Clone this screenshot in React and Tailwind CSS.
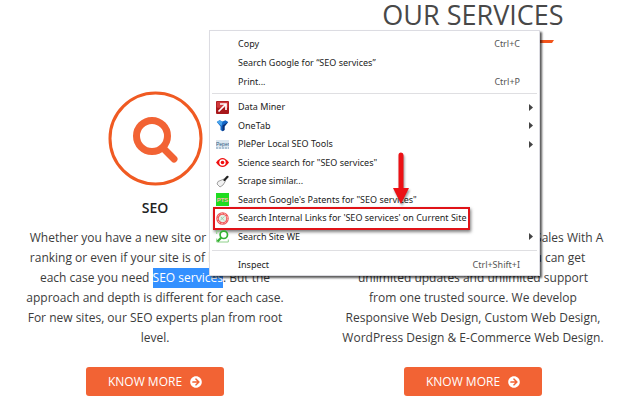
import React from 'react';
import { FaArrowCircleRight } from 'react-icons/fa';

const tools = [
  { label: 'Data Miner', icon: 'miner', submenu: true },
  { label: 'OneTab', icon: 'funnel', submenu: true },
  { label: 'PlePer Local SEO Tools', icon: 'pleper', submenu: true },
  { label: 'Science search for "SEO services"', icon: 'eye' },
  { label: 'Scrape similar...', icon: 'scraper' },
  { label: 'Search Google\'s Patents for "SEO services"', icon: 'patents' },
  { label: "Search Internal Links for 'SEO services' on Current Site", icon: 'links', marked: true },
  { label: 'Search Site WE', icon: 'site', submenu: true },
];

// 13x13 extension icons
const icons = {
  miner: (
    <>
      <rect width="13" height="13" rx="1" fill="#a8181b" />
      <rect x=".7" y=".7" width="11.6" height="6" rx="1" fill="#cf3a3c" />
      <path d="M2.5 10.5 9 4M4 3H10V9" stroke="#fff" strokeWidth="1.7" fill="none" />
    </>
  ),
  funnel: (
    <>
      <path d="M.8 3 3.5 1.2 6.5 2.6 9.5 1.2 12.2 3 8.5 7.5V11L6.5 12.2 4.5 11V7.5Z" fill="#1467c8" />
      <path d="M.8 3 3.5 1.2 6.5 2.6 5.5 7Z" fill="#4ba6ec" />
      <path d="M6.5 6.5 12.2 3 8.5 7.5V11L6.5 12.2Z" fill="#0b2f74" />
    </>
  ),
  pleper: (
    <>
      <rect y="2" width="13" height="9" fill="#dbe6ef" />
      <text x="0" y="8" fontSize="5" fill="#2f5b80" fontFamily="Liberation Sans">Peper</text>
      <path d="M0 10h13" stroke="#7d9cb8" strokeDasharray="2 1" />
    </>
  ),
  eye: (
    <>
      <path d="M0 6.5Q6.5-2.5 13 6.5 6.5 15.5 0 6.5Z" fill="#f01010" />
      <circle cx="6.5" cy="6.5" r="3.2" fill="#fff" />
      <circle cx="6.5" cy="6.5" r="1.8" fill="#f01010" />
    </>
  ),
  scraper: (
    <>
      <path d="M8 4 2 6.5 1 9l3 3 3-2L9.5 6Z" fill="#f2f2f2" stroke="#8a8a8a" strokeWidth=".8" />
      <path d="M8.5 5 11.5 1.8" stroke="#222" strokeWidth="2.2" strokeLinecap="round" />
    </>
  ),
  patents: (
    <>
      <rect width="13" height="13" fill="#1fdc1f" />
      <text x="6.5" y="9" textAnchor="middle" fontSize="6" fontWeight="700" fill="#ffb3b0" fontFamily="Liberation Sans">PTS</text>
    </>
  ),
  links: (
    <>
      <circle cx="6.5" cy="6.5" r="5" fill="#e4f0e6" stroke="#ef5a5a" strokeWidth="2.6" />
      <circle cx="6.5" cy="6.5" r="5" fill="none" stroke="#fbb" strokeWidth="1" strokeDasharray="2 1.5" />
      <path d="m4.5 8 4-3.5M5 5l3 3.5" stroke="#8fc7a0" strokeWidth=".8" />
    </>
  ),
  site: (
    <>
      <path d="M.7 4V1h4M.7 8.5V12h11.6V9.5" fill="none" stroke="#8ed08a" strokeWidth="1" />
      <circle cx="7.8" cy="4.8" r="3.7" fill="#fff" stroke="#35b233" strokeWidth="1.7" />
      <path d="M5.3 7.5 1.5 11.5" stroke="#35b233" strokeWidth="2.2" />
    </>
  ),
};

const MenuItem = ({ label, icon, shortcut, submenu, marked }) => (
  <button className="relative flex flex-1 w-full items-center pl-1.5 pr-[19px] text-left">
    <span className="w-[22px] shrink-0">
      {icon && (
        <svg width="13" height="13" viewBox="0 0 13 13">
          {icons[icon]}
        </svg>
      )}
    </span>
    <span className="flex-1 whitespace-nowrap">{label}</span>
    {shortcut && <span className="text-[#555]">{shortcut}</span>}
    {submenu && (
      <svg className="absolute right-1.5" width="4" height="7" viewBox="0 0 4 7">
        <path d="M0 0 4 3.5 0 7Z" fill="#444" />
      </svg>
    )}
    {marked && (
      <span className="absolute -inset-y-0.5 left-[3px] right-[69px] border-2 border-[#e01318] shadow-[1px_2px_3px_rgba(0,0,0,0.5)]" />
    )}
  </button>
);

const ContextMenu = () => (
  <div className="absolute left-[209px] top-[30px] w-[331px] border border-[#dcdce2] bg-white pt-1 pb-px text-[9px] leading-3 text-[#1c1c1c] shadow-[2px_2px_2px_rgba(0,0,0,0.65)] font-['Noto_Sans',sans-serif]">
    <div className="flex h-14 flex-col">
      <MenuItem label="Copy" shortcut="Ctrl+C" />
      <MenuItem label={'Search Google for “SEO services”'} />
      <MenuItem label="Print..." shortcut="Ctrl+P" />
    </div>
    <hr className="mx-0.5 mt-0.5 mb-1 border-[#dfdfe2]" />
    <div className="flex h-[148px] flex-col">
      {tools.map((tool) => (
        <MenuItem key={tool.label} {...tool} />
      ))}
    </div>
    <hr className="mx-0.5 mt-1 mb-[5px] border-[#dfdfe2]" />
    <div className="flex h-[18px] flex-col">
      <MenuItem label="Inspect" shortcut="Ctrl+Shift+I" />
    </div>
    {/* callout arrow */}
    <svg className="absolute left-[182px] top-[119px] drop-shadow-[1px_2px_1px_rgba(0,0,0,0.4)]" width="18" height="56" viewBox="0 0 18 56">
      <path d="M6.5 5a2.5 2.5 0 0 1 5 0v33H17L9 54 1 38h5.5Z" fill="#ec1115" />
    </svg>
  </div>
);

const KnowMore = () => (
  <button className="mt-[19px] inline-flex h-[29px] w-[138px] items-center justify-center gap-2 rounded-[3px] bg-[#f26334] text-[12px] font-medium text-white">
    KNOW MORE
    <FaArrowCircleRight size={12} />
  </button>
);

const Lines = ({ children }) => (
  <p className="whitespace-nowrap text-[12px] leading-5 text-[#3c3c3c]">
    {React.Children.map(children, (line) => (
      <span className="block">{line}</span>
    ))}
  </p>
);

export default function App() {
  return (
    <main className="relative min-h-screen overflow-hidden bg-white font-['Open_Sans',sans-serif]">
      <div className="grid grid-cols-2 gap-x-9 pl-3.5 pr-[26px] text-center">
        <header className="col-start-2 h-[91px]">
          <h1 className="text-[27px] leading-[30px] whitespace-nowrap text-[#484848]">OUR SERVICES</h1>
          <svg className="mx-auto mt-2.5" width="162" height="3" viewBox="0 0 162 3">
            <path d="M2 0h160l-2 3H0Z" fill="#f2541b" />
          </svg>
        </header>
        <section className="col-start-1">
          <svg className="mx-auto" width="95" height="95" viewBox="0 0 95 95" fill="none">
            <circle cx="47.5" cy="47.5" r="45.5" stroke="#f05a22" strokeWidth="3" />
            <circle cx="44" cy="45" r="15.5" stroke="#f26334" strokeWidth="7" />
            <path d="m55.5 57.5 10.5 10.5" stroke="#f26334" strokeWidth="7" strokeLinecap="round" />
          </svg>
          <h2 className="mt-3 mb-2.5 text-[14px] leading-5 font-semibold text-[#222]">SEO</h2>
          <Lines>
            <>Whether you have a new site or need a quick</>
            <>ranking or even if your site is of low traffic, in</>
            <>
              each case you need <mark className="inline-block bg-[#3390ff] text-white">SEO services</mark>. But the
            </>
            <>approach and depth is different for each case.</>
            <>For new sites, our SEO experts plan from root</>
            <>level.</>
          </Lines>
          <KnowMore />
        </section>
        <section className="col-start-2 self-end">
          <Lines>
            <>Increase Your Business Leads and Sales With A</>
            <>new website from us, where you can get</>
            <>unlimited updates and unlimited support</>
            <>from one trusted source. We develop</>
            <>Responsive Web Design, Custom Web Design,</>
            <>WordPress Design &amp; E-Commerce Web Design.</>
          </Lines>
          <KnowMore />
        </section>
      </div>
      <ContextMenu />
    </main>
  );
}
